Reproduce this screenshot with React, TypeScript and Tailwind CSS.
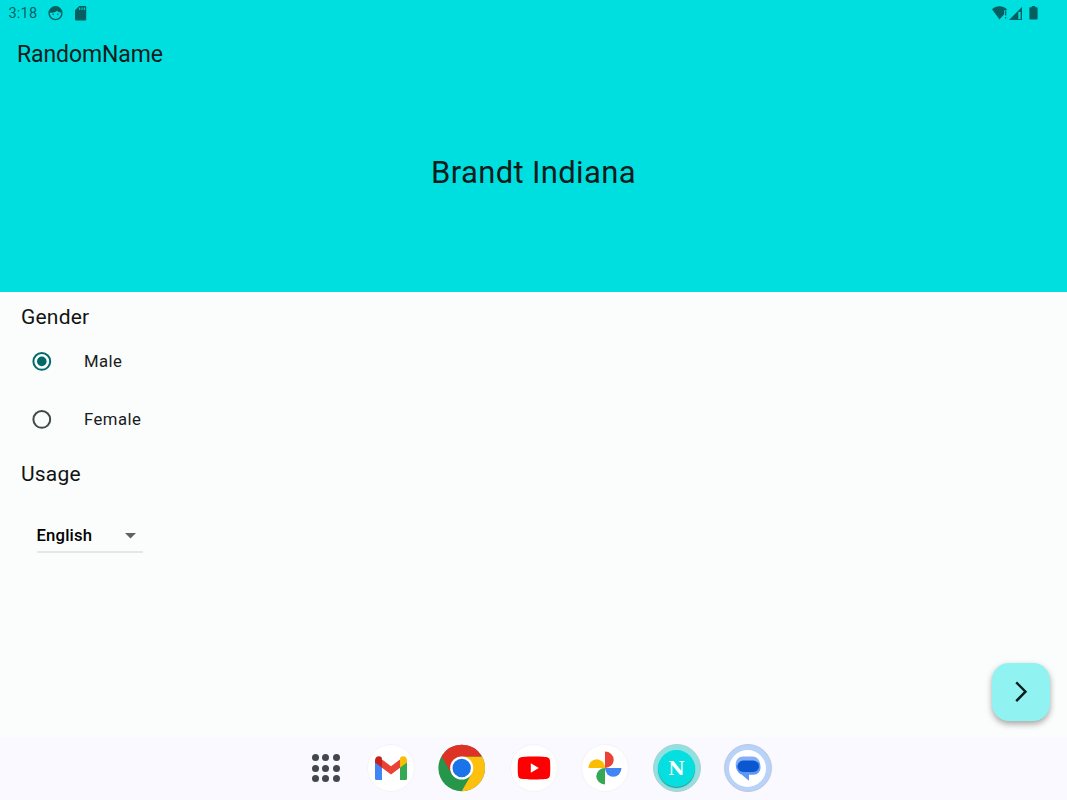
import React, { useState } from 'react';

type Gender = 'Male' | 'Female';

const StatusBar: React.FC = () => (
  <div className="flex h-[26px] items-center pl-[8.5px] pr-[29px] text-[#055f60]">
    <span className="w-[30px] whitespace-nowrap pt-[2px] text-[14.5px] leading-none tracking-[0.2px]">3:18</span>
    <svg className="ml-[9.5px]" width="15" height="15" viewBox="0 0 15 15">
      <circle cx="7.5" cy="7.2" r="6.4" fill="none" stroke="currentColor" strokeWidth="1.4" />
      <path d="M1.3 6.8C1.8 3 4.2 1.2 7.5 1.2s5.7 1.8 6.2 5.6C11.5 6.4 10.2 5.9 9 4.8 7.5 6.3 4.5 7 1.3 6.8z" fill="currentColor" />
      <circle cx="5.2" cy="8.3" r="0.8" fill="currentColor" />
      <circle cx="9.8" cy="8.3" r="0.8" fill="currentColor" />
    </svg>
    <svg className="ml-[11.5px]" width="12" height="15" viewBox="0 0 12 15">
      <path d="M4.2 0H10a1.2 1.2 0 0 1 1.2 1.2v12.1a1.2 1.2 0 0 1-1.2 1.2H1.2A1.2 1.2 0 0 1 0 13.3V4.2z" fill="currentColor" />
      <path d="M4.7 1.5v2.5M7 1.5v2.5M9.3 1.5v2.5" stroke="#00dfdf" strokeWidth="1" />
    </svg>
    <div className="ml-auto flex items-center">
      <svg width="16" height="14" viewBox="0 0 16 14">
        <path d="M0 3.3C4-.8 11-.8 15 3.3l-.8 1H12.2v4L7.500 13.500z" fill="currentColor" />
        <path d="M13.7 4.5v5M13.7 11v1.500" stroke="currentColor" strokeWidth="1.2" />
      </svg>
      <svg className="ml-[1px]" width="13" height="13" viewBox="0 0 13 13">
        <path d="M0 13L13 0v13z" fill="currentColor" />
        <path d="M9.3 5h2.3v7H9.300z" fill="#00dfdf" />
      </svg>
      <svg className="ml-[7px]" width="9" height="14" viewBox="0 0 9 14">
        <path d="M2.8 0h3.4v1.3h1.600a.8.8 0 0 1 .8.8v10.600a.8.8 0 0 1-.8.8H1.200a.8.8 0 0 1-.8-.8V2.100a.8.8 0 0 1 .8-.8h1.600z" fill="currentColor" />
      </svg>
    </div>
  </div>
);

interface RadioRowProps {
  label: Gender;
  checked: boolean;
  onSelect: (value: Gender) => void;
}

const RadioRow: React.FC<RadioRowProps> = ({ label, checked, onSelect }) => (
  <button
    type="button"
    role="radio"
    aria-checked={checked}
    onClick={() => onSelect(label)}
    className="flex h-[58.3px] items-center pl-8 text-left"
  >
    <svg width="20" height="20" viewBox="0 0 20 20" className={checked ? 'text-[#006a6a]' : 'text-[#3f4948]'}>
      <circle cx="9.8" cy="10.4" r="8.4" fill="none" stroke="currentColor" strokeWidth="2" />
      {checked && <circle cx="9.8" cy="10.4" r="4.8" fill="currentColor" />}
    </svg>
    <span className="ml-8 text-[16.7px] tracking-[0.45px] text-[#191c1c]">{label}</span>
  </button>
);

const GmailIcon: React.FC = () => (
  <svg width="48" height="48" viewBox="0 0 48 48">
    <path d="M8 17v17.5a1.500 1.500 0 0 0 1.500 1.500H15V21z" fill="#4285f4" />
    <path d="M33 21v15h5.500a1.500 1.500 0 0 0 1.500-1.500V17z" fill="#34a853" />
    <path d="M15 15.500l9 6.700 9-6.700v8.300l-9 6.700-9-6.700z" fill="#ea4335" />
    <path d="M15 15.500v8.300l-7-5.200v-2.200c0-4 4-5.400 6.600-3.200z" fill="#c5221f" />
    <path d="M33 15.500v8.300l7-5.200v-2.200c0-4-4-5.400-6.600-3.200z" fill="#fbbc04" />
  </svg>
);

const ChromeIcon: React.FC = () => (
  <svg width="48" height="48" viewBox="0 0 48 48">
    <circle cx="23.7" cy="24" r="23.3" fill="#26964a" />
    <path d="M23.700 12.500h20.300A23.300 23.300 0 0 1 23.700 47.300L33.700 29.800z" fill="#fdc00f" />
    <path d="M3.600 12.300A23.300 23.300 0 0 1 44 12.500H23.700L13.700 29.800z" fill="#de3226" />
    <circle cx="23.7" cy="24" r="11.6" fill="#fff" />
    <circle cx="23.7" cy="24" r="9.2" fill="#1a73e8" />
  </svg>
);

const YoutubeIcon: React.FC = () => (
  <svg width="48" height="48" viewBox="0 0 48 48">
    <path d="M11 13.2c4-.9 22-.9 26 0 1.700.4 2.700 1.400 2.900 3 .5 4 .5 11.600 0 15.600-.2 1.600-1.200 2.600-2.900 3-4 .9-22 .9-26 0-1.700-.4-2.700-1.400-2.900-3-.5-4-.5-11.600 0-15.600.2-1.600 1.200-2.600 2.900-3z" fill="#ff0000" />
    <path d="M20.800 19.300v9.400l8-4.700z" fill="#fff" />
  </svg>
);

const PhotosIcon: React.FC = () => (
  <svg width="48" height="48" viewBox="0 0 48 48">
    <path d="M24 7.5a8.700 8.250 0 0 1 0 16.500z" fill="#ea4335" />
    <path d="M40.500 24a8.250 8.700 0 0 1-16.500 0z" fill="#4285f4" />
    <path d="M24 40.500a8.700 8.250 0 0 1 0-16.500z" fill="#34a853" />
    <path d="M7.500 24a8.250 8.700 0 0 1 16.500 0z" fill="#fbbc04" />
  </svg>
);

const MessagesIcon: React.FC = () => (
  <svg width="48" height="48" viewBox="0 0 48 48">
    <path d="M19 12.5h9.500a7.500 7.500 0 0 1 7.500 7.500v6H13.500a8 8 0 0 1-1.800-5.500c0-4.500 3-8 7.300-8z" fill="#84aff8" />
    <path d="M12 21L35 18c1.200 1.500 1.500 3.500 1.500 5.500 0 4.200-3 7.200-7 7.200H25v6.100l-7.500-6.300C14.500 29.500 12 26 12 21z" fill="#5e97f6" />
    <rect x="13.5" y="16.5" width="21.5" height="11.5" rx="5.7" fill="#0b57d0" />
  </svg>
);

const Taskbar: React.FC = () => (
  <div className="flex h-[63px] items-center bg-[#faf9ff] pb-px pl-[312px]">
    <div className="grid w-[28px] grid-cols-3 gap-[3.4px]">
      {Array.from({ length: 9 }, (_, i) => (
        <span key={i} className="size-[7px] rounded-full bg-[#44464f]" />
      ))}
    </div>
    <div className="ml-[27px] flex gap-[23.4px]">
      <div className="size-12 rounded-full border border-[#f4f3f9] bg-white">
        <div className="-m-px"><GmailIcon /></div>
      </div>
      <ChromeIcon />
      <div className="size-12 rounded-full border border-[#f4f3f9] bg-white">
        <div className="-m-px"><YoutubeIcon /></div>
      </div>
      <div className="size-12 rounded-full border border-[#f4f3f9] bg-white">
        <div className="-m-px"><PhotosIcon /></div>
      </div>
      <div className="flex size-12 items-center justify-center rounded-full border border-[#b8cccf] bg-[#8ee2e2]">
        <div className="flex size-[37px] items-center justify-center rounded-full bg-[#05dfdf] pt-[2px] font-['DejaVu_Serif',serif] text-[18px] font-bold leading-none text-white shadow-[0_1px_1px_rgba(0,80,80,0.6)]">
          N
        </div>
      </div>
      <div className="flex size-12 items-center justify-center rounded-full border border-[#bec8da] bg-[#b8d2fa]">
        <div className="flex size-[37px] items-center justify-center rounded-full bg-white">
          <div className="shrink-0"><MessagesIcon /></div>
        </div>
      </div>
    </div>
  </div>
);

const App: React.FC = () => {
  const [gender, setGender] = useState<Gender>('Male');

  return (
    <div className="flex h-screen flex-col overflow-hidden bg-[#fbfdfc] font-[Roboto,sans-serif]">
      <header className="flex h-[291.5px] shrink-0 flex-col bg-[#00dfdf] text-[#111c1c]">
        <StatusBar />
        <h1 className="pl-[17px] pt-[13px] text-[23px] leading-[32px] tracking-[-0.1px]">RandomName</h1>
        <div className="pt-[82px] text-center text-[31px] leading-[40px] tracking-[0.35px]">Brandt Indiana</div>
      </header>

      <main className="flex grow flex-col">
        <h2 className="pl-[21px] pt-[11.5px] text-[21px] leading-[28px] tracking-[0.2px] text-[#111414]">Gender</h2>
        <div role="radiogroup" className="flex flex-col pt-[1px]">
          <RadioRow label="Male" checked={gender === 'Male'} onSelect={setGender} />
          <RadioRow label="Female" checked={gender === 'Female'} onSelect={setGender} />
        </div>
        <h2 className="pl-[21px] pt-[11.5px] text-[21px] leading-[28px] tracking-[0.2px] text-[#111414]">Usage</h2>
        <button
          type="button"
          className="ml-[36.5px] mt-[30px] flex h-[35px] w-[106px] items-center justify-between border-b-2 border-[#e5e7e7] pr-[7px] pt-[1px]"
        >
          <span className="text-[16.7px] font-medium tracking-[0.15px] text-black">English</span>
          <svg className="mt-px" width="11" height="6" viewBox="0 0 11 6">
            <path d="M0 0h11L5.500 5.500z" fill="#616262" />
          </svg>
        </button>
        <button
          type="button"
          aria-label="Next name"
          className="mb-[16.5px] mr-[17px] mt-auto flex size-[58px] items-center justify-center self-end rounded-[17px] bg-[#90f3f1] shadow-[0_3px_6px_rgba(0,0,0,0.35)]"
        >
          <svg width="14" height="22" viewBox="0 0 14 22" fill="none" stroke="#081c1c" strokeWidth="2.4">
            <path d="M2.200 1.300L11.500 10.700l-9.300 9.400" />
          </svg>
        </button>
      </main>

      <Taskbar />
    </div>
  );
};

export default App;
